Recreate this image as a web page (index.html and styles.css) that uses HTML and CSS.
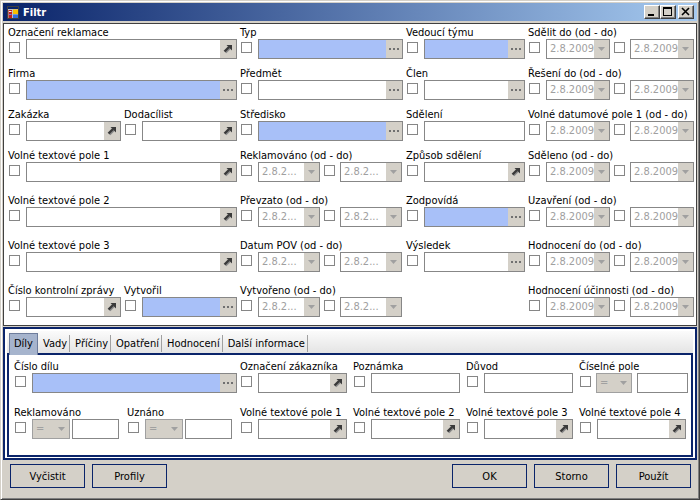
FILE: index.html
```html
<!DOCTYPE html>
<html lang="cs">
<head>
<meta charset="utf-8">
<title>Filtr</title>
<link rel="stylesheet" href="styles.css">
</head>
<body>
<svg class="defs" width="0" height="0" aria-hidden="true">
  <defs>
    <symbol id="arr" viewBox="0 0 10 10">
      <path d="M2.5 8.5 L7 4" stroke="#8a8a8a" stroke-width="2.4"/>
      <path d="M1.5 7.5 L6 3" stroke="#3a3a3a" stroke-width="2.4"/>
      <path d="M3.5 1 H9 V6.5 Z" fill="#3a3a3a"/>
    </symbol>
    <symbol id="ell" viewBox="0 0 11 2">
      <rect x="0" y="0" width="2" height="2" fill="#707070"/>
      <rect x="4" y="0" width="2" height="2" fill="#707070"/>
      <rect x="8" y="0" width="2" height="2" fill="#707070"/>
    </symbol>
    <symbol id="tri" viewBox="0 0 7 4">
      <path d="M0 0 H7 L3.5 4 Z" fill="#a0a0a0"/>
    </symbol>
  </defs>
</svg>

<div class="window">
  <div class="titlebar">
    <svg class="app-icon" width="12" height="13" viewBox="0 0 12 13">
      <rect x="0.5" y="0.5" width="11" height="12" fill="#c0c0c0" stroke="#404040"/>
      <rect x="1" y="1" width="10" height="2" fill="#0a246a"/>
      <rect x="1.5" y="4" width="3.5" height="8" fill="#c02020"/>
      <rect x="2" y="5" width="2.5" height="1" fill="#f0f0f0"/>
      <rect x="2" y="8" width="2.5" height="1" fill="#6080e0"/>
      <rect x="6" y="3.5" width="5" height="4.5" fill="#f8c000"/>
      <rect x="6" y="8.5" width="5" height="3.5" fill="#3070e0"/>
    </svg>
    <span class="title">Filtr</span>
    <div class="tbtns">
      <span class="tb"><svg width="14" height="12" viewBox="0 0 14 12"><rect x="3" y="8" width="6" height="2" fill="#000"/></svg></span>
      <span class="tb"><svg width="14" height="12" viewBox="0 0 14 12"><rect x="2.5" y="1.5" width="8" height="8" fill="none" stroke="#000"/><rect x="2" y="1" width="9" height="2" fill="#000"/></svg></span>
      <span class="tb close"><svg width="14" height="12" viewBox="0 0 14 12"><path d="M3 2 L10 9 M10 2 L3 9" stroke="#000" stroke-width="1.6"/></svg></span>
    </div>
  </div>

  <div class="upper">
    <!-- row 1 -->
    <div class="fld c1"><div class="lbl">Označení reklamace</div><div class="ctl"><span class="cb"></span><span class="inp"><span class="btn"><svg class="ic-arr"><use href="#arr"/></svg></span></span></div></div>
    <div class="fld c2"><div class="lbl">Typ</div><div class="ctl"><span class="cb"></span><span class="inp blue"><span class="btn"><svg class="ic-ell"><use href="#ell"/></svg></span></span></div></div>
    <div class="fld c3"><div class="lbl">Vedoucí týmu</div><div class="ctl"><span class="cb"></span><span class="inp blue"><span class="btn"><svg class="ic-ell"><use href="#ell"/></svg></span></span></div></div>
    <div class="fld c4"><div class="lbl">Sdělit do (od - do)</div><div class="ctl"><span class="cb"></span><span class="date"><span class="val">2.8.2009</span><span class="dd"><svg class="ic-tri"><use href="#tri"/></svg></span></span><span class="cb cb2"></span><span class="date"><span class="val">2.8.2009</span><span class="dd"><svg class="ic-tri"><use href="#tri"/></svg></span></span></div></div>

    <!-- row 2 -->
    <div class="fld c1"><div class="lbl">Firma</div><div class="ctl"><span class="cb"></span><span class="inp blue"><span class="btn"><svg class="ic-ell"><use href="#ell"/></svg></span></span></div></div>
    <div class="fld c2"><div class="lbl">Předmět</div><div class="ctl"><span class="cb"></span><span class="inp"><span class="btn"><svg class="ic-ell"><use href="#ell"/></svg></span></span></div></div>
    <div class="fld c3"><div class="lbl">Člen</div><div class="ctl"><span class="cb"></span><span class="inp"><span class="btn"><svg class="ic-ell"><use href="#ell"/></svg></span></span></div></div>
    <div class="fld c4"><div class="lbl">Řešení do (od - do)</div><div class="ctl"><span class="cb"></span><span class="date"><span class="val">2.8.2009</span><span class="dd"><svg class="ic-tri"><use href="#tri"/></svg></span></span><span class="cb cb2"></span><span class="date"><span class="val">2.8.2009</span><span class="dd"><svg class="ic-tri"><use href="#tri"/></svg></span></span></div></div>

    <!-- row 3 -->
    <div class="split c1">
      <div class="fld half"><div class="lbl">Zakázka</div><div class="ctl"><span class="cb"></span><span class="inp"><span class="btn"><svg class="ic-arr"><use href="#arr"/></svg></span></span></div></div>
      <div class="fld half"><div class="lbl">Dodacílist</div><div class="ctl"><span class="cb"></span><span class="inp"><span class="btn"><svg class="ic-arr"><use href="#arr"/></svg></span></span></div></div>
    </div>
    <div class="fld c2"><div class="lbl">Středisko</div><div class="ctl"><span class="cb"></span><span class="inp blue"><span class="btn"><svg class="ic-ell"><use href="#ell"/></svg></span></span></div></div>
    <div class="fld c3"><div class="lbl">Sdělení</div><div class="ctl"><span class="cb"></span><span class="inp"></span></div></div>
    <div class="fld c4"><div class="lbl">Volné datumové pole 1 (od - do)</div><div class="ctl"><span class="cb"></span><span class="date"><span class="val">2.8.2009</span><span class="dd"><svg class="ic-tri"><use href="#tri"/></svg></span></span><span class="cb cb2"></span><span class="date"><span class="val">2.8.2009</span><span class="dd"><svg class="ic-tri"><use href="#tri"/></svg></span></span></div></div>

    <!-- row 4 -->
    <div class="fld c1"><div class="lbl">Volné textové pole 1</div><div class="ctl"><span class="cb"></span><span class="inp"><span class="btn"><svg class="ic-arr"><use href="#arr"/></svg></span></span></div></div>
    <div class="fld c2"><div class="lbl">Reklamováno (od - do)</div><div class="ctl"><span class="cb"></span><span class="date"><span class="val">2.8.2...</span><span class="dd"><svg class="ic-tri"><use href="#tri"/></svg></span></span><span class="cb cb2"></span><span class="date"><span class="val">2.8.2...</span><span class="dd"><svg class="ic-tri"><use href="#tri"/></svg></span></span></div></div>
    <div class="fld c3"><div class="lbl">Způsob sdělení</div><div class="ctl"><span class="cb"></span><span class="inp"><span class="btn"><svg class="ic-arr"><use href="#arr"/></svg></span></span></div></div>
    <div class="fld c4"><div class="lbl">Sděleno (od - do)</div><div class="ctl"><span class="cb"></span><span class="date"><span class="val">2.8.2009</span><span class="dd"><svg class="ic-tri"><use href="#tri"/></svg></span></span><span class="cb cb2"></span><span class="date"><span class="val">2.8.2009</span><span class="dd"><svg class="ic-tri"><use href="#tri"/></svg></span></span></div></div>

    <!-- row 5 -->
    <div class="fld c1"><div class="lbl">Volné textové pole 2</div><div class="ctl"><span class="cb"></span><span class="inp"><span class="btn"><svg class="ic-arr"><use href="#arr"/></svg></span></span></div></div>
    <div class="fld c2"><div class="lbl">Převzato (od - do)</div><div class="ctl"><span class="cb"></span><span class="date"><span class="val">2.8.2...</span><span class="dd"><svg class="ic-tri"><use href="#tri"/></svg></span></span><span class="cb cb2"></span><span class="date"><span class="val">2.8.2...</span><span class="dd"><svg class="ic-tri"><use href="#tri"/></svg></span></span></div></div>
    <div class="fld c3"><div class="lbl">Zodpovídá</div><div class="ctl"><span class="cb"></span><span class="inp blue"><span class="btn"><svg class="ic-ell"><use href="#ell"/></svg></span></span></div></div>
    <div class="fld c4"><div class="lbl">Uzavření (od - do)</div><div class="ctl"><span class="cb"></span><span class="date"><span class="val">2.8.2009</span><span class="dd"><svg class="ic-tri"><use href="#tri"/></svg></span></span><span class="cb cb2"></span><span class="date"><span class="val">2.8.2009</span><span class="dd"><svg class="ic-tri"><use href="#tri"/></svg></span></span></div></div>

    <!-- row 6 -->
    <div class="fld c1"><div class="lbl">Volné textové pole 3</div><div class="ctl"><span class="cb"></span><span class="inp"><span class="btn"><svg class="ic-arr"><use href="#arr"/></svg></span></span></div></div>
    <div class="fld c2"><div class="lbl">Datum POV (od - do)</div><div class="ctl"><span class="cb"></span><span class="date"><span class="val">2.8.2...</span><span class="dd"><svg class="ic-tri"><use href="#tri"/></svg></span></span><span class="cb cb2"></span><span class="date"><span class="val">2.8.2...</span><span class="dd"><svg class="ic-tri"><use href="#tri"/></svg></span></span></div></div>
    <div class="fld c3"><div class="lbl">Výsledek</div><div class="ctl"><span class="cb"></span><span class="inp"><span class="btn"><svg class="ic-ell"><use href="#ell"/></svg></span></span></div></div>
    <div class="fld c4"><div class="lbl">Hodnocení do (od - do)</div><div class="ctl"><span class="cb"></span><span class="date"><span class="val">2.8.2009</span><span class="dd"><svg class="ic-tri"><use href="#tri"/></svg></span></span><span class="cb cb2"></span><span class="date"><span class="val">2.8.2009</span><span class="dd"><svg class="ic-tri"><use href="#tri"/></svg></span></span></div></div>

    <!-- row 7 -->
    <div class="split c1">
      <div class="fld half"><div class="lbl">Číslo kontrolní zprávy</div><div class="ctl"><span class="cb"></span><span class="inp"><span class="btn"><svg class="ic-arr"><use href="#arr"/></svg></span></span></div></div>
      <div class="fld half"><div class="lbl">Vytvořil</div><div class="ctl"><span class="cb"></span><span class="inp blue"><span class="btn"><svg class="ic-ell"><use href="#ell"/></svg></span></span></div></div>
    </div>
    <div class="fld c2"><div class="lbl">Vytvořeno (od - do)</div><div class="ctl"><span class="cb"></span><span class="date"><span class="val">2.8.2...</span><span class="dd"><svg class="ic-tri"><use href="#tri"/></svg></span></span><span class="cb cb2"></span><span class="date"><span class="val">2.8.2...</span><span class="dd"><svg class="ic-tri"><use href="#tri"/></svg></span></span></div></div>
    <div class="fld c3"></div>
    <div class="fld c4"><div class="lbl">Hodnocení účinnosti (od - do)</div><div class="ctl"><span class="cb"></span><span class="date"><span class="val">2.8.2009</span><span class="dd"><svg class="ic-tri"><use href="#tri"/></svg></span></span><span class="cb cb2"></span><span class="date"><span class="val">2.8.2009</span><span class="dd"><svg class="ic-tri"><use href="#tri"/></svg></span></span></div></div>
  </div>

  <div class="tabctl">
    <div class="tabstrip">
      <span class="tab sel">Díly</span>
      <span class="tab">Vady</span>
      <span class="tab">Příčiny</span>
      <span class="tab">Opatření</span>
      <span class="tab">Hodnocení</span>
      <span class="tab">Další informace</span>
    </div>
    <div class="tabpage">
      <div class="fld span2"><div class="lbl">Číslo dílu</div><div class="ctl"><span class="cb"></span><span class="inp blue"><span class="btn"><svg class="ic-ell"><use href="#ell"/></svg></span></span></div></div>
      <div class="fld"><div class="lbl">Označení zákazníka</div><div class="ctl"><span class="cb"></span><span class="inp"><span class="btn"><svg class="ic-arr"><use href="#arr"/></svg></span></span></div></div>
      <div class="fld"><div class="lbl">Poznámka</div><div class="ctl"><span class="cb"></span><span class="inp"></span></div></div>
      <div class="fld"><div class="lbl">Důvod</div><div class="ctl"><span class="cb"></span><span class="inp"></span></div></div>
      <div class="fld"><div class="lbl">Číselné pole</div><div class="ctl"><span class="cb"></span><span class="combo narrow"><span class="val">=</span><span class="dd"><svg class="ic-tri"><use href="#tri"/></svg></span></span><span class="num wide"></span></div></div>

      <div class="fld"><div class="lbl">Reklamováno</div><div class="ctl"><span class="cb"></span><span class="combo"><span class="val">=</span><span class="dd"><svg class="ic-tri"><use href="#tri"/></svg></span></span><span class="num"></span></div></div>
      <div class="fld"><div class="lbl">Uznáno</div><div class="ctl"><span class="cb"></span><span class="combo"><span class="val">=</span><span class="dd"><svg class="ic-tri"><use href="#tri"/></svg></span></span><span class="num"></span></div></div>
      <div class="fld"><div class="lbl">Volné textové pole 1</div><div class="ctl"><span class="cb"></span><span class="inp"><span class="btn"><svg class="ic-arr"><use href="#arr"/></svg></span></span></div></div>
      <div class="fld"><div class="lbl">Volné textové pole 2</div><div class="ctl"><span class="cb"></span><span class="inp"><span class="btn"><svg class="ic-arr"><use href="#arr"/></svg></span></span></div></div>
      <div class="fld"><div class="lbl">Volné textové pole 3</div><div class="ctl"><span class="cb"></span><span class="inp"><span class="btn"><svg class="ic-arr"><use href="#arr"/></svg></span></span></div></div>
      <div class="fld"><div class="lbl">Volné textové pole 4</div><div class="ctl"><span class="cb"></span><span class="inp"><span class="btn"><svg class="ic-arr"><use href="#arr"/></svg></span></span></div></div>
    </div>
  </div>

  <div class="buttons">
    <span class="pbtn">Vyčistit</span>
    <span class="pbtn">Profily</span>
    <span class="spacer"></span>
    <span class="pbtn">OK</span>
    <span class="pbtn">Storno</span>
    <span class="pbtn">Použít</span>
  </div>
</div>
</body>
</html>
```

FILE: styles.css
```css
* { box-sizing: border-box; }
html, body { margin: 0; padding: 0; }
body {
  width: 700px;
  height: 500px;
  overflow: hidden;
  background: #d4d0c8;
  font-family: "DejaVu Sans Condensed", "Liberation Sans", sans-serif;
  font-stretch: condensed;
  font-size: 11px;
  color: #000;
}
.defs { position: absolute; width: 0; height: 0; overflow: hidden; }

.window {
  width: 700px;
  height: 500px;
  background: #d4d0c8;
  border: 1px solid;
  border-color: #d4d0c8 #404040 #404040 #d4d0c8;
  box-shadow: inset 1px 1px #fff, inset -1px -1px #808080;
  padding: 2px;
  display: flex;
  flex-direction: column;
}

/* title bar */
.titlebar {
  height: 18px;
  flex: none;
  background: linear-gradient(to right, #0a246a, #a6caf0);
  display: flex;
  align-items: center;
  padding: 0 3px 0 4px;
  color: #fff;
}
.app-icon { flex: none; margin-right: 4px; }
.title { flex: 1; font-weight: bold; font-size: 11px; }
.tbtns { display: flex; align-items: center; }
.tb {
  width: 16px;
  height: 14px;
  background: #d4d0c8;
  border: 1px solid;
  border-color: #fff #404040 #404040 #fff;
  box-shadow: inset -1px -1px #808080;
  display: flex;
}
.tb svg { display: block; }
.tb.close { margin-left: 2px; }

/* upper white panel */
.upper {
  margin-top: 2px;
  height: 303px;
  flex: none;
  background: #fff;
  border: 1px solid #404040;
  padding: 2px 0 0 4px;
  display: grid;
  grid-template-columns: 232px 166px 122px 168px;
  grid-template-rows: 41px 41px 41px 45px 45px 45px 33px;
}
.fld { display: flex; flex-direction: column; min-width: 0; }
.lbl { height: 13px; line-height: 14px; white-space: nowrap; }
.ctl { display: flex; height: 20px; align-items: flex-start; }
.cb {
  flex: none;
  width: 11px;
  height: 11px;
  border: 1px solid #868686;
  background: #fff;
  margin: 3px 6px 0 1px;
}
.cb2 { margin: 3px 5px 0 4px; }
.inp {
  flex: 1;
  height: 20px;
  margin-right: 3px;
  border: 1px solid #878787;
  background: #fff;
  display: flex;
  justify-content: flex-end;
}
.inp.blue { background: #a8c0f8; }
.btn {
  width: 16px;
  height: 18px;
  background: #d4d0c8;
  display: flex;
  align-items: center;
  justify-content: center;
}
.ic-arr { width: 10px; height: 10px; }
.ic-ell { width: 11px; height: 2px; }
.ic-tri { width: 7px; height: 4px; }

.split { display: flex; }
.split .half { width: 116px; }

.date {
  flex: none;
  height: 20px;
  border: 1px solid #878787;
  background: #fff;
  display: flex;
  color: #a0a0a0;
}
.c4 .date { width: 64px; }
.c2 .date { width: 62px; }
.val {
  flex: 1;
  padding-left: 3px;
  line-height: 18px;
  white-space: nowrap;
  overflow: hidden;
}
.dd {
  width: 15px;
  height: 18px;
  background: #d4d0c8;
  display: flex;
  align-items: center;
  justify-content: center;
}

/* tab control */
.tabctl {
  margin-top: 1px;
  height: 133px;
  flex: none;
  border: 2px solid #0a246a;
  background: #fff;
  padding: 2px 2px 1px 2px;
  display: flex;
  flex-direction: column;
}
.tabstrip {
  height: 22px;
  flex: none;
  display: flex;
  align-items: flex-end;
  background: linear-gradient(#fbfbfb, #e4e4e4);
  padding-left: 2px;
  position: relative;
  z-index: 1;
}
.tab {
  height: 17px;
  margin-bottom: 1px;
  line-height: 17px;
  padding: 0 2px 0 5px;
  border-right: 1px solid #a0a0a0;
  white-space: nowrap;
}
.tab.sel {
  height: 22px;
  margin-bottom: -2px;
  line-height: 20px;
  padding: 0 4px 0 4px;
  background: #a6b4cd;
  border: 1px solid #6e7d9c;
  border-bottom: none;
}
.tabpage {
  flex: 1;
  border: 2px solid #0a246a;
  background: #fff;
  padding: 5px 0 0 5px;
  display: grid;
  grid-template-columns: repeat(5, 113px) 112px;
  grid-template-rows: 33px 33px;
  row-gap: 13px;
}
.tabpage .inp { flex: none; width: 89px; }
.tabpage .span2 { grid-column: span 2; }
.tabpage .span2 .inp { width: 205px; }
.combo {
  flex: none;
  width: 38px;
  height: 20px;
  border: 1px solid #a0a0a0;
  background: #d4d0c8;
  color: #a0a0a0;
  display: flex;
  margin-right: 2px;
}
.combo.narrow { width: 36px; margin-left: -1px; margin-right: 5px; }
.combo .dd { width: 15px; }
.num {
  flex: none;
  width: 47px;
  height: 20px;
  border: 1px solid #878787;
  background: #fff;
}
.num.wide { width: 51px; }

/* bottom buttons */
.buttons {
  flex: 1;
  display: flex;
  align-items: flex-start;
  padding: 4px 6px 0 7px;
  gap: 7px;
}
.spacer { flex: 1; }
.pbtn {
  width: 75px;
  height: 24px;
  border: 1px solid #0a246a;
  background: #d4d0c8;
  display: flex;
  align-items: center;
  justify-content: center;
}
```
